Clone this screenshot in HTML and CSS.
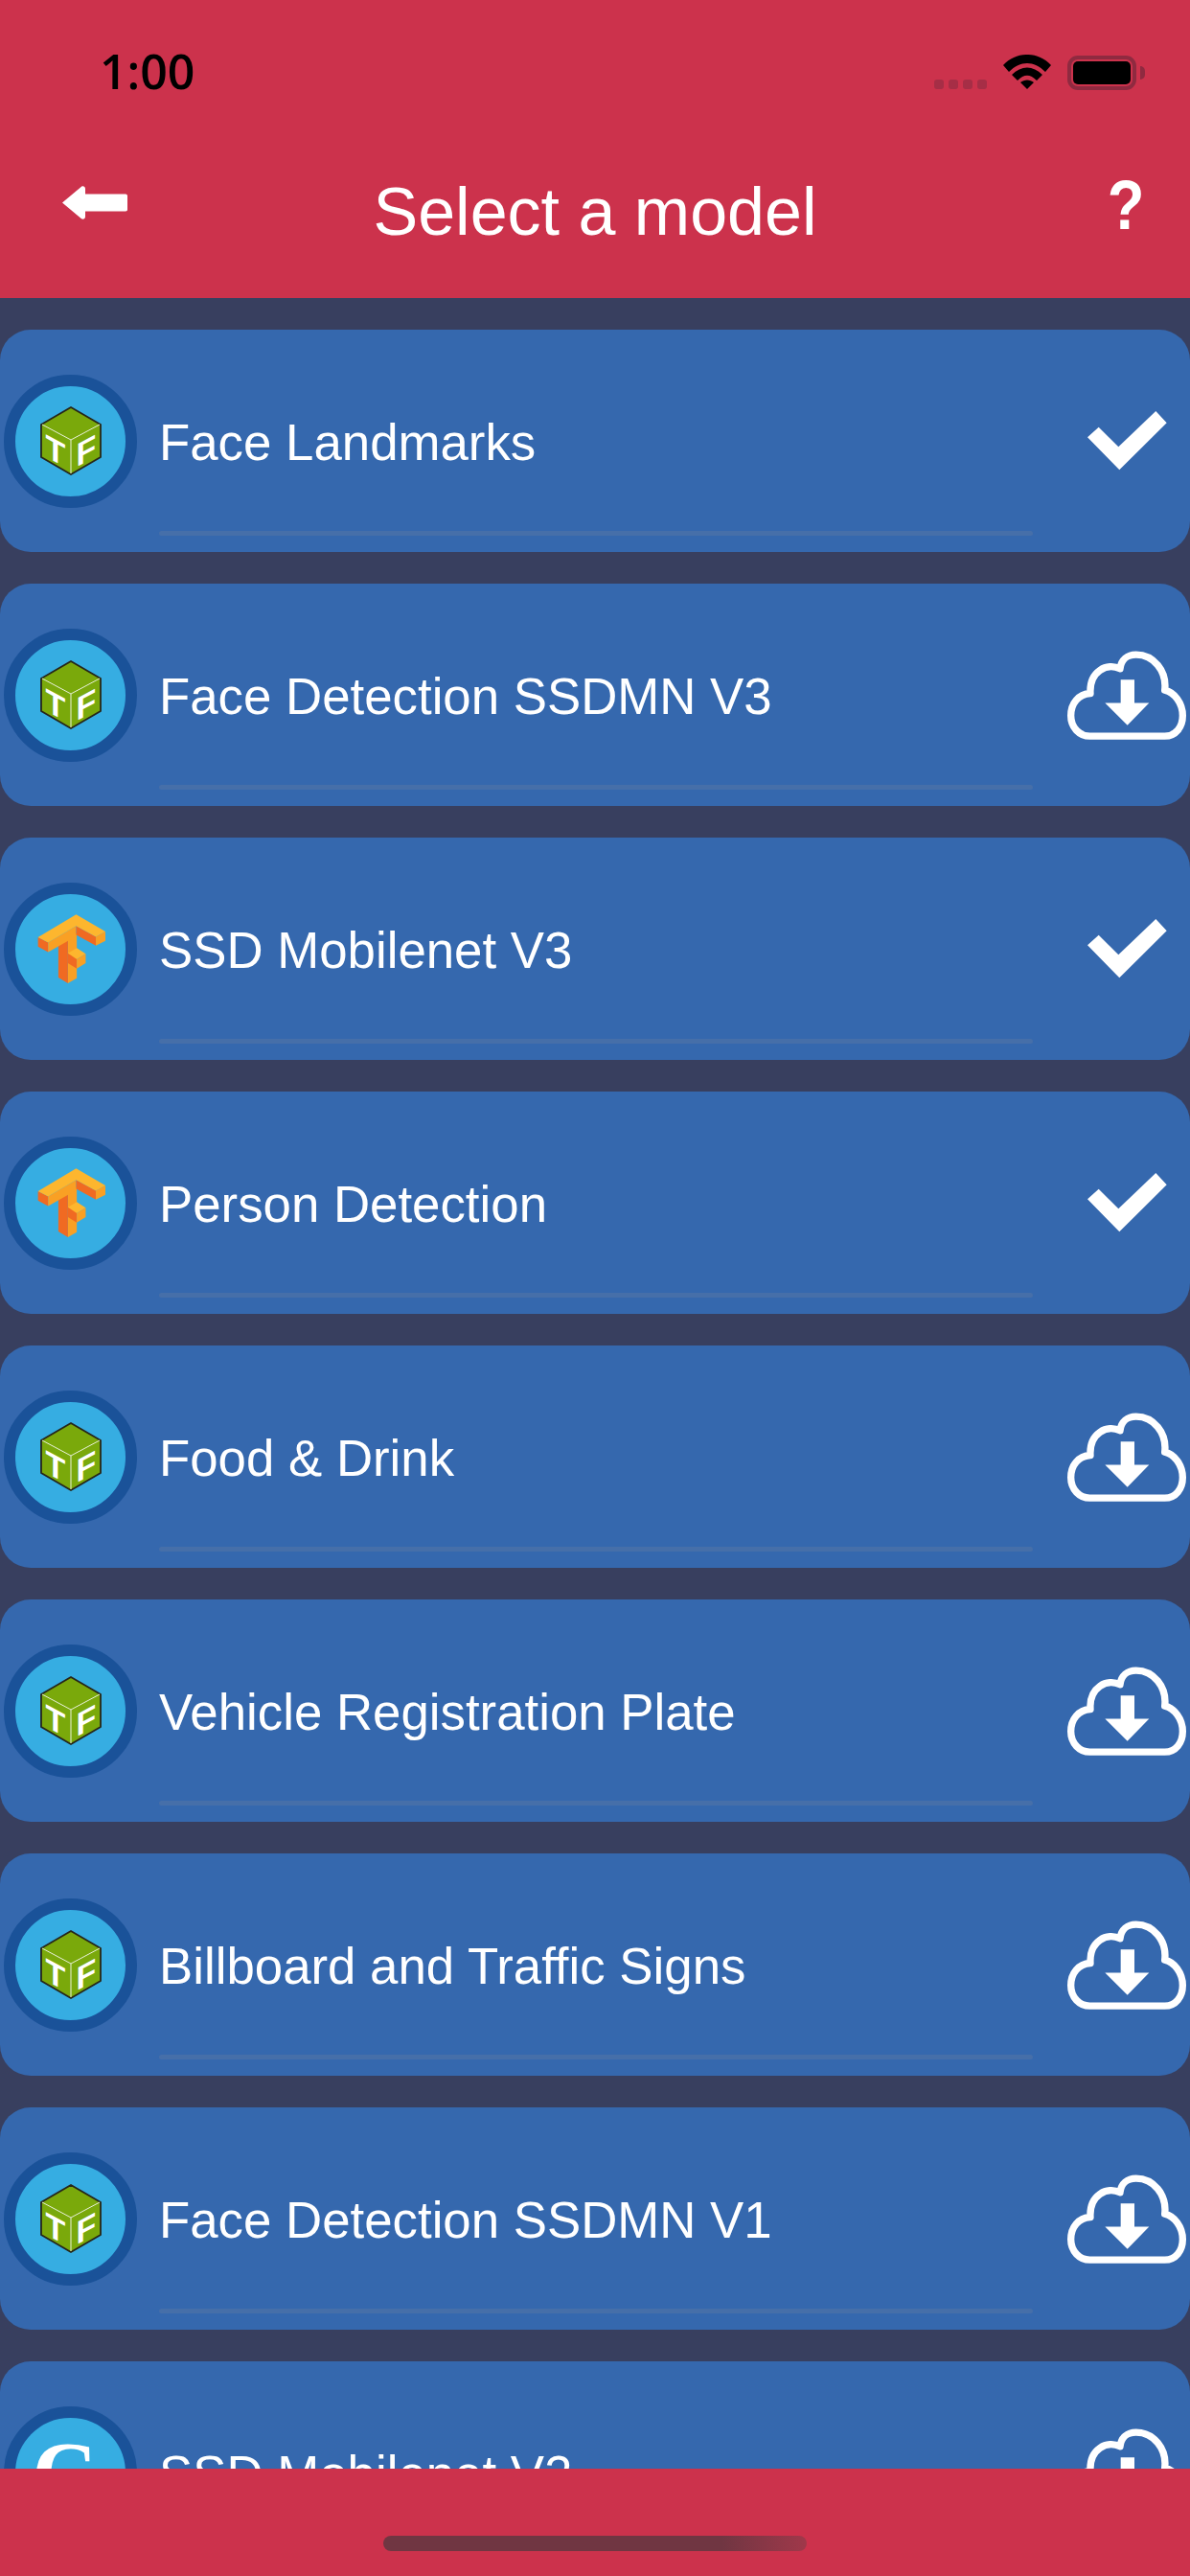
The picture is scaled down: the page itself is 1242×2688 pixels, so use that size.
FILE: index.html
```html
<!DOCTYPE html>
<html lang="en">
<head>
<meta charset="utf-8">
<title>Select a model</title>
<link rel="stylesheet" href="styles.css">
</head>
<body>
<svg class="defs" width="0" height="0" aria-hidden="true">
  <defs>
    <symbol id="cube" viewBox="0 0 64 72">
      <path d="M32 1 63 19V53L32 71 1 53V19Z" fill="#7aa90b" stroke="#26261a" stroke-width="1.8" stroke-linejoin="round"/>
      <path d="M2 19 32 35 62 19M32 35V70" fill="none" stroke="#e8f0d8" stroke-width="1"/>
      <text class="cube-t" transform="translate(16 58) skewY(28)">T</text>
      <text class="cube-t" transform="translate(48 58) skewY(-28)">F</text>
    </symbol>
    <symbol id="tflogo" viewBox="20 41 220 220">
      <path d="M122 120 150 100V242L122 258Z" fill="#f9a024"/>
      <path d="M92 140 122 120V258L92 240Z" fill="#f06a22"/>
      <path d="M28 113 60 130V160L28 143Z" fill="#f06a22"/>
      <path d="M60 130 148 78V110L60 160Z" fill="#f9a024"/>
      <path d="M148 78 210 112V140L148 106Z" fill="#f06a22"/>
      <path d="M210 112 240 95V125L210 140Z" fill="#f9a024"/>
      <path d="M148 42 240 95 210 112 148 78 60 130 28 113Z" fill="#fdb62e"/>
      <path d="M122 164 150 147 178 165 150 183Z" fill="#fdb62e"/>
      <path d="M122 164 150 183V212L122 195Z" fill="#f06a22"/>
      <path d="M150 183 178 165V195L150 212Z" fill="#f9a024"/>
    </symbol>
    <symbol id="check" viewBox="0 0 83 62">
      <path d="M0 27.3 11.7 16.7 32.3 37.3 71.3 0 82.7 12.3 33.3 61.3Z" fill="#fff"/>
    </symbol>
    <symbol id="cloud" viewBox="40 42 372 278">
      <path d="M110 309H345C380 309 401 280 401 245 401 205 375 172 345 165 352 105 310 54 255 54 228 54 208 70 205 98 165 78 108 105 112 175 75 178 51 205 51 245 51 282 78 309 110 309Z" fill="none" stroke="#fff" stroke-width="22" stroke-linejoin="round"/>
      <path d="M207 132H250V205H296L228 275 158 205H207Z" fill="#fff"/>
    </symbol>
  </defs>
</svg>
<div class="screen">
  <header class="top">
    <div class="status">
      <span class="time">1:00</span>
      <div class="status-icons">
        <div class="signal"><i></i><i></i><i></i><i></i></div>
        <svg class="wifi" viewBox="0 0 50 36"><path d="M0 11C14-3.700 36-3.700 50 11L44 18C32 6 18 6 6 18Z" fill="#000"/><path d="M9 21C19 11 31 11 41 21L35 27C28 20 22 20 15 27Z" fill="#000"/><path d="M18 29C22 25.500 28 25.500 32 29L25 36Z" fill="#000"/></svg>
        <div class="battery"><div class="battery-fill"></div></div>
        <div class="battery-tip"></div>
      </div>
    </div>
    <nav class="nav">
      <svg class="back" viewBox="0 0 68 35"><path d="M0 17.500 20 .7C21.500-.3 24 .3 24 3V8.500H66C67.500 8.500 68 9.500 68 10.500V24.500C68 25.500 67.500 26.500 66 26.500H24V32C24 34.700 21.500 35.300 20 34.300Z" fill="#fff"/></svg>
      <h1 class="title">Select a model</h1>
      <span class="help">?</span>
    </nav>
  </header>
  <main class="list">
    <article class="row">
      <div class="ring"><svg class="cube"><use href="#cube"/></svg></div>
      <span class="name">Face Landmarks</span>
      <svg class="check"><use href="#check"/></svg>
      <div class="rule"></div>
    </article>
    <article class="row">
      <div class="ring"><svg class="cube"><use href="#cube"/></svg></div>
      <span class="name">Face Detection SSDMN V3</span>
      <svg class="cloud"><use href="#cloud"/></svg>
      <div class="rule"></div>
    </article>
    <article class="row">
      <div class="ring"><svg class="tf"><use href="#tflogo"/></svg></div>
      <span class="name">SSD Mobilenet V3</span>
      <svg class="check"><use href="#check"/></svg>
      <div class="rule"></div>
    </article>
    <article class="row">
      <div class="ring"><svg class="tf"><use href="#tflogo"/></svg></div>
      <span class="name">Person Detection</span>
      <svg class="check"><use href="#check"/></svg>
      <div class="rule"></div>
    </article>
    <article class="row">
      <div class="ring"><svg class="cube"><use href="#cube"/></svg></div>
      <span class="name">Food &amp; Drink</span>
      <svg class="cloud"><use href="#cloud"/></svg>
      <div class="rule"></div>
    </article>
    <article class="row">
      <div class="ring"><svg class="cube"><use href="#cube"/></svg></div>
      <span class="name">Vehicle Registration Plate</span>
      <svg class="cloud"><use href="#cloud"/></svg>
      <div class="rule"></div>
    </article>
    <article class="row">
      <div class="ring"><svg class="cube"><use href="#cube"/></svg></div>
      <span class="name">Billboard and Traffic Signs</span>
      <svg class="cloud"><use href="#cloud"/></svg>
      <div class="rule"></div>
    </article>
    <article class="row">
      <div class="ring"><svg class="cube"><use href="#cube"/></svg></div>
      <span class="name">Face Detection SSDMN V1</span>
      <svg class="cloud"><use href="#cloud"/></svg>
      <div class="rule"></div>
    </article>
    <article class="row">
      <div class="ring"><span class="core">C</span></div>
      <span class="name">SSD Mobilenet V2</span>
      <svg class="cloud"><use href="#cloud"/></svg>
      <div class="rule"></div>
    </article>
  </main>
  <footer class="bottom"><div class="home"></div></footer>
</div>
</body>
</html>
```
FILE: styles.css
```css
* { box-sizing: border-box; }
html, body { margin: 0; padding: 0; }
body { width: 1242px; height: 2688px; overflow: hidden; font-family: "Liberation Sans", Arial, sans-serif; background: #383f5f; }
.defs { display: block; height: 0; }
.screen { width: 1242px; height: 2688px; display: flex; flex-direction: column; overflow: hidden; }

.top { height: 311px; flex: none; background: #cc324c; display: flex; flex-direction: column; }
.status { height: 150px; flex: none; display: flex; justify-content: space-between; align-items: flex-start; padding: 49px 47px 0 104px; }
.time { font-family: "Open Sans", sans-serif; font-weight: 600; font-size: 50px; line-height: 50px; color: #000; }
.status-icons { display: flex; align-items: flex-start; padding-top: 8px; }
.signal { display: flex; gap: 5px; margin: 26px 17px 0 0; }
.signal i { width: 10px; height: 10px; border-radius: 3px; background: #a62e46; display: block; }
.wifi { width: 50px; height: 36px; margin-right: 17px; }
.battery { width: 72px; height: 36px; margin-top: 1px; border: 4px solid #8f2a40; border-radius: 11px; padding: 2px; }
.battery-fill { width: 100%; height: 100%; background: #000; border-radius: 5px; }
.battery-tip { width: 5px; height: 14px; margin: 12px 0 0 4px; background: #8f2a40; border-radius: 0 5px 5px 0; }

.nav { flex: 1; display: grid; grid-template-columns: 1fr auto 1fr; align-items: start; padding: 0 45px; }
.back { width: 68px; height: 35px; margin: 44px 0 0 20px; }
.title { margin: 32px 0 0; font-weight: 400; font-size: 70px; line-height: 78px; color: #fff; }
.help { justify-self: end; font-weight: 700; font-size: 72px; line-height: 72px; color: #fff; margin-top: 28px; transform: scaleX(.88); }

.list { flex: 1; min-height: 0; overflow: hidden; display: flex; flex-direction: column; gap: 33px; padding-top: 33px; background: #383f5f; }
.row { flex: none; height: 232px; background: #3568ae; border-radius: 32px; display: flex; align-items: center; padding-left: 4px; position: relative; }
.ring { width: 139px; height: 139px; flex: none; border-radius: 50%; background: #36ade2; border: 12px solid #1a5299; display: flex; align-items: center; justify-content: center; overflow: hidden; }
.cube { width: 64px; height: 72px; }
.tf { width: 73px; height: 73px; }
.cube-t { font-family: "Liberation Sans", sans-serif; font-weight: 700; font-size: 34px; fill: #fff; text-anchor: middle; }
.core { font-family: "Liberation Serif", serif; font-weight: 700; font-size: 94px; line-height: 94px; color: #fff; margin: 0 12px 0 0; }
.name { margin-left: 23px; padding-top: 3px; font-size: 52.8px; line-height: 60px; color: #fff; flex: 1; white-space: nowrap; font-variant-ligatures: none; }
.check { width: 83px; height: 62px; flex: none; margin-right: 24px; }
.cloud { width: 124px; height: 93px; flex: none; margin-right: 4px; }
.rule { position: absolute; left: 166px; width: 912px; bottom: 17px; height: 5px; background: #466fa9; border-radius: 3px; }

.bottom { height: 112px; flex: none; background: #cc324c; display: flex; justify-content: center; padding-top: 70px; position: relative; z-index: 1; }
.home { width: 442px; height: 16px; border-radius: 8px; background: linear-gradient(90deg, #703642 0%, #703642 80%, #a0384a 100%); }
```
